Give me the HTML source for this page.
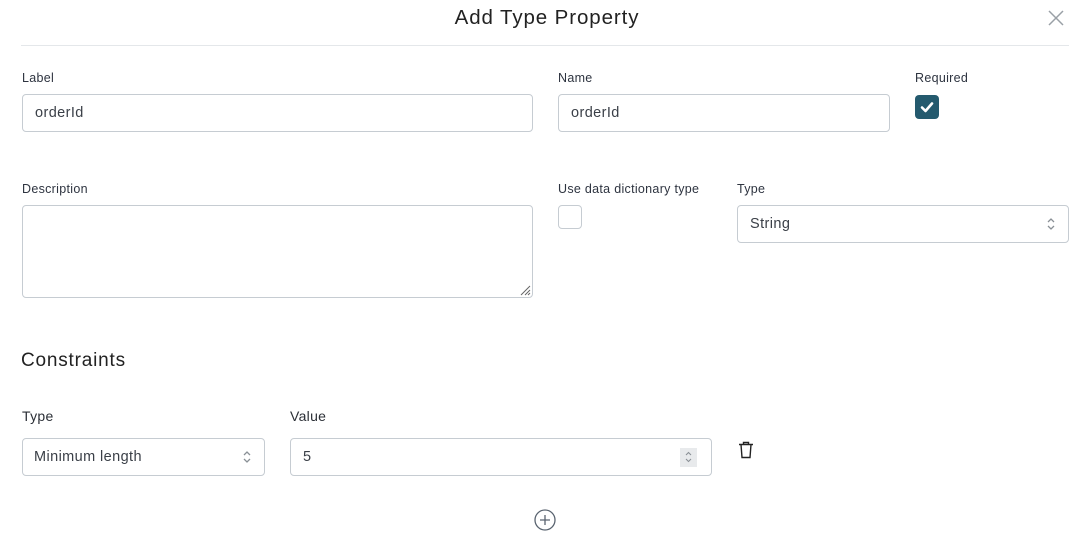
<!DOCTYPE html>
<html><head><style>
*{box-sizing:border-box;margin:0;padding:0}
body{width:1092px;height:546px;background:#fff;font-family:"Liberation Sans",sans-serif;color:#2b2f36;position:relative;overflow:hidden}
.a{position:absolute}
.lbl{font-size:12.5px;color:#2e3440;letter-spacing:0.3px}
.in{border:1px solid #c6ccd2;border-radius:4px;background:#fff;font-size:14.5px;color:#3a3f47;padding-left:12px;display:flex;align-items:center;letter-spacing:0.4px}
.chev{position:absolute;right:12px;top:50%;transform:translateY(-50%)}
</style></head><body>
<div class="a" style="left:0;width:1092px;top:6px;text-align:center;font-size:20.5px;color:#222;letter-spacing:0.9px;padding-left:2px">Add Type Property</div>
<svg class="a" style="left:1048px;top:10px" width="16" height="16" viewBox="0 0 16 16"><path d="M1 1L15 15M15 1L1 15" stroke="#9aa0a6" stroke-width="1.5"/></svg>
<div class="a" style="left:21px;top:45px;width:1048px;height:1px;background:#e4e7ea"></div>

<div class="a lbl" style="left:22px;top:71px">Label</div>
<div class="a in" style="left:22px;top:94px;width:511px;height:38px">orderId</div>
<div class="a lbl" style="left:558px;top:71px">Name</div>
<div class="a in" style="left:558px;top:94px;width:332px;height:38px">orderId</div>
<div class="a lbl" style="left:915px;top:71px">Required</div>
<div class="a" style="left:915px;top:95px;width:24px;height:24px;border-radius:4px;background:#245a6e"></div>
<svg class="a" style="left:915px;top:95px" width="24" height="24"><path d="M7 12.5L10.5 16L17 8.5" stroke="#fff" stroke-width="2.6" fill="none" stroke-linecap="round" stroke-linejoin="round"/></svg>

<div class="a lbl" style="left:22px;top:182px">Description</div>
<div class="a in" style="left:22px;top:205px;width:511px;height:93px"></div>
<svg class="a" style="left:519px;top:284px" width="12" height="12"><path d="M11 2L2 11M11 6L6 11M11 9L9 11" stroke="#666" stroke-width="1"/></svg>
<div class="a lbl" style="left:558px;top:182px">Use data dictionary type</div>
<div class="a" style="left:558px;top:205px;width:24px;height:24px;border:1px solid #c6ccd2;border-radius:4px"></div>
<div class="a lbl" style="left:737px;top:182px">Type</div>
<div class="a in" style="left:737px;top:205px;width:332px;height:38px">String
<svg class="chev" width="10" height="16"><path d="M2 6L5 3L8 6M2 10L5 13L8 10" stroke="#8a9096" stroke-width="1.3" fill="none"/></svg></div>

<div class="a" style="left:21px;top:350px;font-size:19px;color:#222;letter-spacing:0.8px">Constraints</div>
<div class="a" style="left:22px;top:408px;font-size:14px;letter-spacing:0.3px">Type</div>
<div class="a in" style="left:22px;top:438px;width:243px;height:38px;padding-left:11px">Minimum length
<svg class="chev" width="10" height="16"><path d="M2 6L5 3L8 6M2 10L5 13L8 10" stroke="#8a9096" stroke-width="1.3" fill="none"/></svg></div>
<div class="a" style="left:290px;top:408px;font-size:14px;letter-spacing:0.3px">Value</div>
<div class="a in" style="left:290px;top:438px;width:422px;height:38px">5
<div class="a" style="right:14px;top:9px;width:17px;height:19px;background:#e8eaec"></div>
<svg class="a" style="right:16px;top:10px" width="13" height="16"><path d="M4 6L6.5 3.5L9 6M4 10L6.5 12.5L9 10" stroke="#8a9096" stroke-width="1.1" fill="none"/></svg></div>
<svg class="a" style="left:738px;top:441px" width="16" height="18" viewBox="0 0 16 18"><path d="M1 3.5H15M5.5 3.5V1.5H10.5V3.5M3 3.5L4 16.5H12L13 3.5" stroke="#222" stroke-width="1.4" fill="none"/></svg>
<svg class="a" style="left:533px;top:508px" width="24" height="24"><circle cx="12" cy="12" r="10" stroke="#5a6470" stroke-width="1.3" fill="none"/><path d="M12 7V17M7 12H17" stroke="#5a6470" stroke-width="1.3"/></svg>
</body></html>
